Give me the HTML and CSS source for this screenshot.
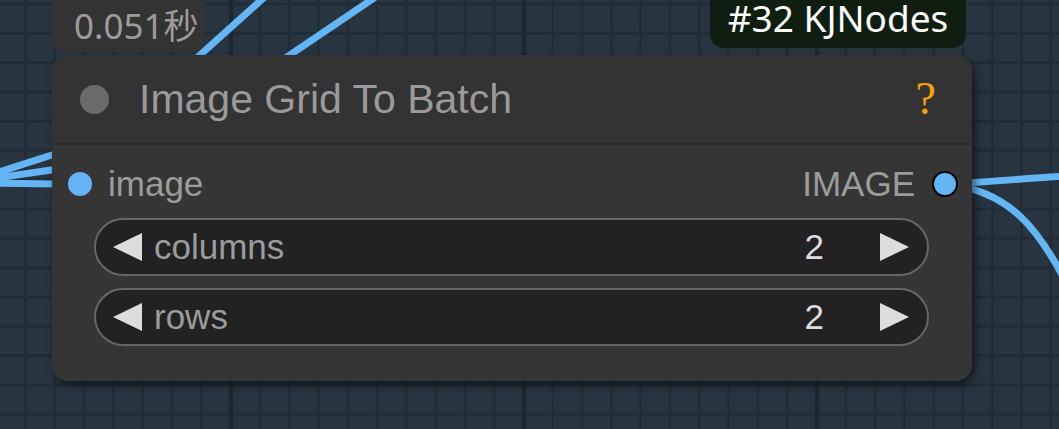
FILE: index.html
```html
<!DOCTYPE html>
<html lang="en">

<head>
    <meta charset="UTF-8">
    <meta name="viewport" content="width=device-width, initial-scale=1.0">
    <title>Image Grid To Batch</title>
    <link rel="stylesheet" href="styles.css">
</head>

<body>
    <div class="graph">
        <svg class="links" width="1059" height="429" viewBox="0 0 1059 429">
            <!-- links coming in from the left -->
            <path d="M -10 175 L 58 153" />
            <path d="M -10 179 L 58 169" />
            <path d="M -10 183 L 58 184" />
            <!-- links passing behind the top of the node -->
            <path d="M 170 82 L 268 -6" />
            <path d="M 250 82 L 380 -6" />
            <!-- output links -->
            <path d="M 945 184 C 990 182, 1030 178, 1070 176" />
            <path d="M 945 184 C 1010 190, 1040 230, 1070 290" />
        </svg>

        <div class="badge badge-time">0.051秒</div>
        <div class="badge badge-source">#32 KJNodes</div>

        <div class="node">
            <div class="node-title">
                <span class="title-dot"></span>
                <span class="title-text">Image Grid To Batch</span>
                <span class="help">?</span>
            </div>
            <div class="node-body">
                <div class="slot-row">
                    <div class="slot slot-in">
                        <span class="slot-dot"></span>
                        <span class="slot-label">image</span>
                    </div>
                    <div class="slot slot-out">
                        <span class="slot-label">IMAGE</span>
                        <span class="slot-dot"></span>
                    </div>
                </div>
                <div class="widget">
                    <span class="arrow arrow-left"></span>
                    <span class="widget-name">columns</span>
                    <span class="widget-value">2</span>
                    <span class="arrow arrow-right"></span>
                </div>
                <div class="widget">
                    <span class="arrow arrow-left"></span>
                    <span class="widget-name">rows</span>
                    <span class="widget-value">2</span>
                    <span class="arrow arrow-right"></span>
                </div>
            </div>
        </div>
    </div>
</body>

</html>
```

FILE: styles.css
```css
html,
body {
    margin: 0;
    padding: 0;
}

body {
    width: 1059px;
    height: 429px;
    overflow: hidden;
    font-family: "Liberation Sans", Arial, sans-serif;
}

/* canvas grid */
.graph {
    position: relative;
    width: 1059px;
    height: 429px;
    background-color: #283540;
    background-image:
        linear-gradient(to right, #1d2730 4px, transparent 4px),
        linear-gradient(to right, #212c36 3px, transparent 3px),
        linear-gradient(to bottom, #212c36 3px, transparent 3px);
    background-size: 293px 429px, 29.3px 29.3px, 29.3px 29.3px;
    background-position: 229px 0, 24px 0, 0 2.5px;
}

.links {
    position: absolute;
    left: 0;
    top: 0;
}

.links path {
    fill: none;
    stroke: #64b5f6;
    stroke-width: 7;
}

/* badges above the node */
.badge {
    position: absolute;
    top: 0;
    box-sizing: border-box;
    display: flex;
}

.badge-time {
    left: 52px;
    width: 153px;
    height: 52px;
    align-items: center;
    padding-left: 22px;
    padding-bottom: 2px;
    background: #333333;
    border-radius: 0 0 12px 12px;
    color: #9c9c9c;
    font-family: "Noto Sans", "Noto Sans CJK SC", sans-serif;
    font-size: 35px;
    line-height: 1;
}

.badge-source {
    left: 710px;
    width: 256px;
    height: 48px;
    justify-content: center;
    align-items: flex-start;
    padding-top: 2px;
    background: #0f1e10;
    border-radius: 0 0 14px 14px;
    color: #ffffff;
    font-family: "Noto Sans", sans-serif;
    font-size: 37px;
    line-height: 0.85;
}

/* node */
.node {
    position: absolute;
    left: 52px;
    top: 55px;
    width: 920px;
    height: 326px;
    box-sizing: border-box;
    background: #353535;
    border-radius: 16px;
    box-shadow: 3px 4px 8px rgba(0, 0, 0, 0.55);
    display: flex;
    flex-direction: column;
}

.node-title {
    height: 90px;
    box-sizing: border-box;
    display: flex;
    align-items: center;
    padding: 0 36px 0 28px;
    background: #333333;
    border-radius: 16px 16px 0 0;
    border-bottom: 2px solid #2a2a2a;
}

.title-dot {
    width: 29px;
    height: 29px;
    border-radius: 50%;
    background: #6b6b6b;
    flex: none;
}

.title-text {
    margin-left: 30px;
    flex: 1;
    color: #9a9a9a;
    font-size: 41px;
}

.help {
    color: #f7a200;
    font-family: "Liberation Serif", serif;
    font-size: 46px;
    line-height: 1;
}

.node-body {
    flex: 1;
    display: flex;
    flex-direction: column;
    gap: 12px;
    padding: 16px 0 0 0;
}

.slot-row {
    height: 45px;
    display: flex;
    align-items: center;
    justify-content: space-between;
    padding: 0 14px 0 16px;
}

.slot {
    display: flex;
    align-items: center;
}

.slot-label {
    color: #9c9c9c;
    font-size: 35px;
}

.slot-dot {
    width: 24px;
    height: 24px;
    border-radius: 50%;
    background: #64b5f6;
    box-sizing: border-box;
}

.slot-in .slot-dot {
    margin-right: 16px;
}

.slot-out .slot-dot {
    width: 26px;
    height: 26px;
    border: 2px solid #000000;
    margin-left: 17px;
}

.widget {
    height: 58px;
    margin: 0 43px 0 42px;
    box-sizing: border-box;
    display: flex;
    align-items: center;
    padding: 0 18px 0 17px;
    background: #222222;
    border: 2px solid #666666;
    border-radius: 29px;
}

.arrow {
    width: 0;
    height: 0;
    border-top: 14.5px solid transparent;
    border-bottom: 14.5px solid transparent;
}

.arrow-left {
    border-right: 29px solid #dddddd;
}

.arrow-right {
    border-left: 29px solid #dddddd;
}

.widget-name {
    margin-left: 12px;
    flex: 1;
    color: #9c9c9c;
    font-size: 35px;
}

.widget-value {
    margin-right: 56px;
    color: #dddddd;
    font-size: 35px;
}
```
